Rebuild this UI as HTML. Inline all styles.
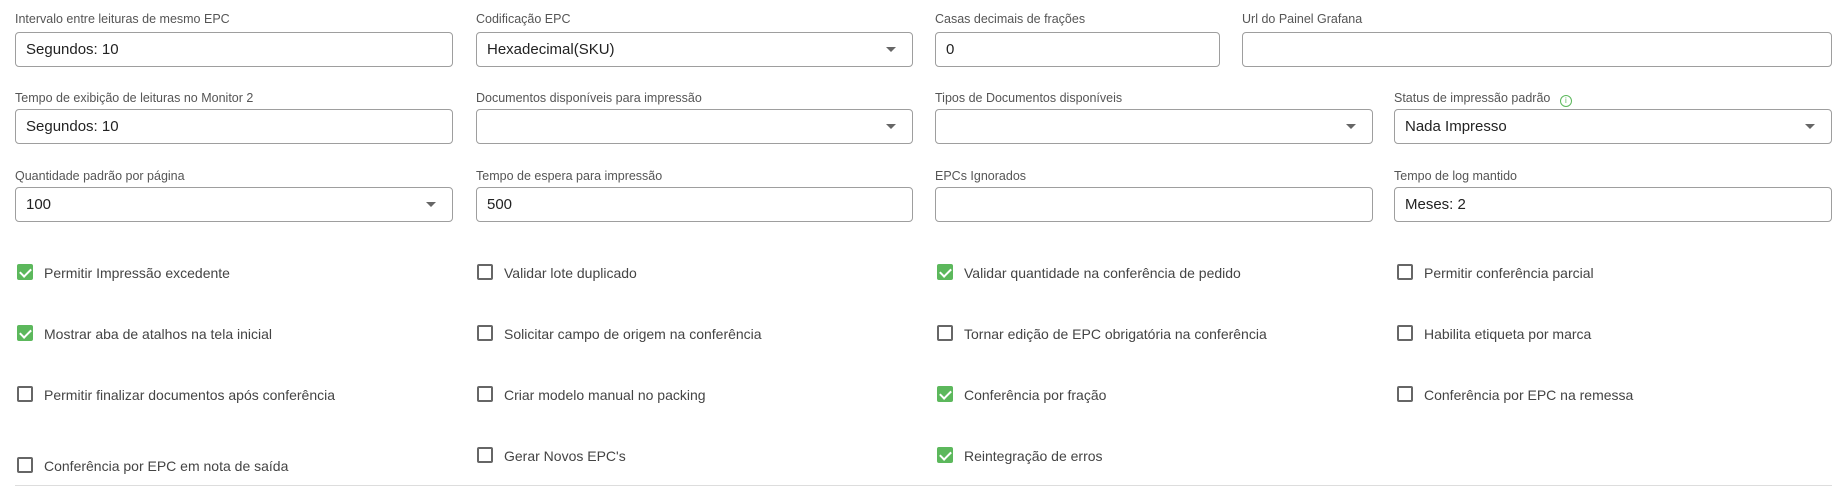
<!DOCTYPE html>
<html><head><meta charset="utf-8"><style>
body{margin:0;width:1846px;height:488px;background:#fff;font-family:"Liberation Sans",sans-serif;position:relative;overflow:hidden}
.l{position:absolute;font-size:12.5px;color:#555;white-space:nowrap}
.b{position:absolute;height:35px;border:1px solid #9e9e9e;border-radius:4px;box-sizing:border-box;font-size:15px;color:#222;line-height:33px;padding-left:10px}
.b.s:after{content:"";position:absolute;right:16px;top:14px;border-left:5px solid transparent;border-right:5px solid transparent;border-top:5px solid #666}
.c{position:absolute;font-size:14px;color:#444;white-space:nowrap;line-height:18px;padding-left:26px}
.c:before{content:"";position:absolute;left:-1px;top:0;width:16px;height:16px;border:2px solid #666;border-radius:2px;box-sizing:border-box;background:#fff}
.c.k:before{border:none;background:#5cb85c}
.c.k:after{content:"";position:absolute;left:4px;top:2px;width:5px;height:9px;border:solid #fff;border-width:0 2px 2px 0;transform:rotate(45deg)}
</style></head><body>
<div class="l" style="left:15px;top:12px">Intervalo entre leituras de mesmo EPC</div>
<div class="b" style="left:15px;top:32px;width:438px">Segundos: 10</div>
<div class="l" style="left:476px;top:12px">Codificação EPC</div>
<div class="b s" style="left:476px;top:32px;width:437px">Hexadecimal(SKU)</div>
<div class="l" style="left:935px;top:12px">Casas decimais de frações</div>
<div class="b" style="left:935px;top:32px;width:285px">0</div>
<div class="l" style="left:1242px;top:12px">Url do Painel Grafana</div>
<div class="b" style="left:1242px;top:32px;width:590px"></div>

<div class="l" style="left:15px;top:91px">Tempo de exibição de leituras no Monitor 2</div>
<div class="b" style="left:15px;top:109px;width:438px">Segundos: 10</div>
<div class="l" style="left:476px;top:91px">Documentos disponíveis para impressão</div>
<div class="b s" style="left:476px;top:109px;width:437px"></div>
<div class="l" style="left:935px;top:91px">Tipos de Documentos disponíveis</div>
<div class="b s" style="left:935px;top:109px;width:438px"></div>
<div class="l" style="left:1394px;top:91px">Status de impressão padrão <span style="display:inline-block;width:10px;height:10px;border:1px solid #5cb85c;border-radius:50%;color:#5cb85c;font-size:8px;line-height:10px;text-align:center;margin-left:6px;vertical-align:-1px">i</span></div>
<div class="b s" style="left:1394px;top:109px;width:438px">Nada Impresso</div>

<div class="l" style="left:15px;top:169px">Quantidade padrão por página</div>
<div class="b s" style="left:15px;top:187px;width:438px">100</div>
<div class="l" style="left:476px;top:169px">Tempo de espera para impressão</div>
<div class="b" style="left:476px;top:187px;width:437px">500</div>
<div class="l" style="left:935px;top:169px">EPCs Ignorados</div>
<div class="b" style="left:935px;top:187px;width:438px"></div>
<div class="l" style="left:1394px;top:169px">Tempo de log mantido</div>
<div class="b" style="left:1394px;top:187px;width:438px">Meses: 2</div>

<div class="c k" style="left:18px;top:264px">Permitir Impressão excedente</div>
<div class="c" style="left:478px;top:264px">Validar lote duplicado</div>
<div class="c k" style="left:938px;top:264px">Validar quantidade na conferência de pedido</div>
<div class="c" style="left:1398px;top:264px">Permitir conferência parcial</div>

<div class="c k" style="left:18px;top:325px">Mostrar aba de atalhos na tela inicial</div>
<div class="c" style="left:478px;top:325px">Solicitar campo de origem na conferência</div>
<div class="c" style="left:938px;top:325px">Tornar edição de EPC obrigatória na conferência</div>
<div class="c" style="left:1398px;top:325px">Habilita etiqueta por marca</div>

<div class="c" style="left:18px;top:386px">Permitir finalizar documentos após conferência</div>
<div class="c" style="left:478px;top:386px">Criar modelo manual no packing</div>
<div class="c k" style="left:938px;top:386px">Conferência por fração</div>
<div class="c" style="left:1398px;top:386px">Conferência por EPC na remessa</div>

<div class="c" style="left:18px;top:457px">Conferência por EPC em nota de saída</div>
<div class="c" style="left:478px;top:447px">Gerar Novos EPC's</div>
<div class="c k" style="left:938px;top:447px">Reintegração de erros</div>

<div style="position:absolute;left:15px;top:485px;width:1817px;height:1px;background:#ddd"></div>
</body></html>
